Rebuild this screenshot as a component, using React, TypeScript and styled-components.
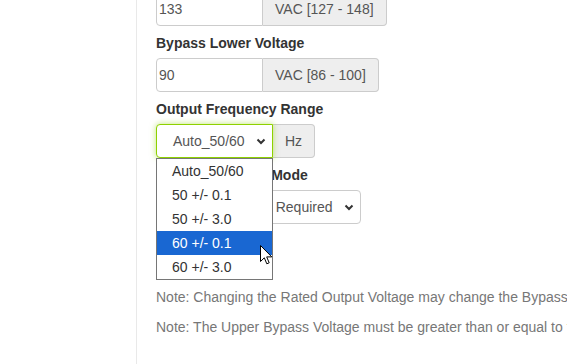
import React from 'react';
import styled, { createGlobalStyle } from 'styled-components';

const GlobalStyle = createGlobalStyle`
  html, body {
    margin: 0;
    padding: 0;
    background: #fff;
    overflow: hidden;
  }
  * {
    box-sizing: border-box;
  }
`;

const Page = styled.div`
  display: flex;
  width: 567px;
  height: 364px;
  overflow: hidden;
  font-family: 'Liberation Sans', Arial, sans-serif;
  font-size: 14px;
  line-height: 20px;
  color: #333;
`;

const Sidebar = styled.div`
  flex: 0 0 137px;
  border-right: 1px solid #e9e9e9;
`;

const Main = styled.div`
  flex: 1 0 auto;
  padding-left: 19px;
  margin-top: -8px;
`;

const FormGroup = styled.div`
  margin-bottom: 7px;
`;

const Label = styled.label`
  display: block;
  font-weight: 700;
  margin-bottom: 5px;
`;

const InputGroup = styled.div`
  display: flex;
  height: 34px;
`;

const TextInput = styled.input`
  width: 107px;
  height: 34px;
  padding: 1px 2px;
  border: 1px solid #ccc;
  border-radius: 4px 0 0 4px;
  font-family: inherit;
  font-size: 14px;
  color: #555;
  background: #fff;
  outline: none;
`;

const Addon = styled.span`
  display: flex;
  align-items: center;
  justify-content: center;
  padding: 0 12px;
  background: #eee;
  border: 1px solid #ccc;
  border-left: none;
  border-radius: 0 4px 4px 0;
  color: #555;
  white-space: nowrap;
`;

const SelectWrap = styled.div`
  position: relative;
`;

const SelectBox = styled.div<{ $width: number; $focused?: boolean }>`
  display: flex;
  align-items: center;
  justify-content: space-between;
  width: ${p => p.$width}px;
  height: 34px;
  padding: 0 6px 0 16px;
  background: #fff;
  border: 1px solid ${p => (p.$focused ? '#8ed100' : '#ccc')};
  border-radius: ${p => (p.$focused ? '4px 0 0 4px' : '4px')};
  box-shadow: ${p => (p.$focused ? '0 0 6px rgba(140, 210, 0, 0.55)' : 'none')};
  color: #555;
  white-space: nowrap;
  overflow: hidden;
`;

const Chevron = () => (
  <svg width="10" height="7" viewBox="0 0 10 7">
    <path d="M1.5 1.5 L5 5 L8.5 1.5" fill="none" stroke="#333" strokeWidth="2" />
  </svg>
);

const Dropdown = styled.ul`
  position: absolute;
  top: 34px;
  left: 0;
  z-index: 5;
  width: 117px;
  margin: 0;
  padding: 0;
  list-style: none;
  background: #fff;
  border: 1px solid #767676;
`;

const Option = styled.li<{ $active?: boolean }>`
  height: 24px;
  line-height: 24px;
  padding-left: 15px;
  color: ${p => (p.$active ? '#fff' : '#333')};
  background: ${p => (p.$active ? '#1967d2' : '#fff')};
  white-space: nowrap;
`;

const Cursor = styled.svg`
  position: absolute;
  left: 103px;
  top: 86px;
  z-index: 6;
`;

const Notes = styled.div`
  padding-top: 56px;
`;

const Note = styled.p`
  margin: 0 0 10px;
  color: #777;
  white-space: nowrap;
`;

const options = ['Auto_50/60', '50 +/- 0.1', '50 +/- 3.0', '60 +/- 0.1', '60 +/- 3.0'];

export default function App() {
  return (
    <>
      <GlobalStyle />
      <Page>
        <Sidebar />
        <Main>
          <FormGroup>
            <InputGroup>
              <TextInput defaultValue="133" />
              <Addon>VAC [127 - 148]</Addon>
            </InputGroup>
          </FormGroup>

          <FormGroup>
            <Label>Bypass Lower Voltage</Label>
            <InputGroup>
              <TextInput defaultValue="90" />
              <Addon>VAC [86 - 100]</Addon>
            </InputGroup>
          </FormGroup>

          <FormGroup>
            <Label>Output Frequency Range</Label>
            <InputGroup>
              <SelectWrap>
                <SelectBox $width={117} $focused>
                  <span>Auto_50/60</span>
                  <Chevron />
                </SelectBox>
                <Dropdown>
                  {options.map(o => (
                    <Option key={o} $active={o === '60 +/- 0.1'}>{o}</Option>
                  ))}
                  <Cursor width="13" height="21" viewBox="0 0 13 21">
                    <path
                      d="M0.5 0.5 L0.5 16.5 L4.3 12.8 L6.8 18.8 L9.2 17.8 L6.7 11.9 L11.8 11.9 Z"
                      fill="#fff"
                      stroke="#000"
                      strokeWidth="1"
                      strokeLinejoin="round"
                    />
                  </Cursor>
                </Dropdown>
              </SelectWrap>
              <Addon>Hz</Addon>
            </InputGroup>
          </FormGroup>

          <FormGroup>
            <Label>Frequency Track Mode</Label>
            <SelectBox $width={205}>
              <span>Phase Lock Not Required</span>
              <Chevron />
            </SelectBox>
          </FormGroup>

          <Notes>
            <Note>Note: Changing the Rated Output Voltage may change the Bypass Voltage limits.</Note>
            <Note>Note: The Upper Bypass Voltage must be greater than or equal to the Rated Output Voltage.</Note>
          </Notes>
        </Main>
      </Page>
    </>
  );
}
